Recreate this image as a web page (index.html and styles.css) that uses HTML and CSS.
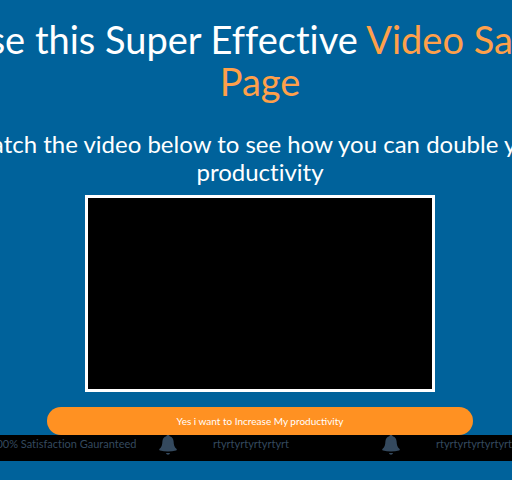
FILE: index.html
```html
<!DOCTYPE html>
<html lang="en">
<head>
<meta charset="utf-8">
<meta name="viewport" content="width=device-width, initial-scale=1">
<title>Video Sales Page</title>
<link rel="stylesheet" href="styles.css">
</head>
<body>
<svg class="defs" aria-hidden="true">
  <symbol id="bell" viewBox="0 0 18 20">
    <path d="M9 0C8 0 7.600 .5 7.300 1.200C4.600 2 3.600 4 3.400 6.500C3.200 10 2.800 12 .4 14C0 14.500 .2 15.500 1 15.500C6 16.800 12 16.800 17 15.500C17.800 15.500 18 14.500 17.600 14C15.200 12 14.800 10 14.600 6.500C14.400 4 13.400 2 10.700 1.200C10.400 .5 10 0 9 0ZM7 18H11C10.700 19.200 10 19.700 9 19.700S7.300 19.200 7 18Z"/>
  </symbol>
</svg>
<main class="page">
  <h1 class="title">Use this Super Effective <span class="accent">Video Sales Page</span></h1>
  <h2 class="subtitle">Watch the video below to see how you can double your productivity</h2>
  <div class="video"></div>
  <button class="cta" type="button">Yes i want to Increase My productivity</button>
</main>
<footer class="features">
  <ul class="list">
    <li class="item"><svg class="bell" aria-hidden="true"><use href="#bell"/></svg><span>100% Satisfaction Gauranteed</span></li>
    <li class="item"><svg class="bell" aria-hidden="true"><use href="#bell"/></svg><span>rtyrtyrtyrtyrtyrt</span></li>
    <li class="item"><svg class="bell" aria-hidden="true"><use href="#bell"/></svg><span>rtyrtyrtyrtyrtyrt</span></li>
  </ul>
</footer>
</body>
</html>
```
FILE: styles.css
```css
* {
  box-sizing: border-box;
}

body {
  margin: 0;
  overflow: hidden;
  background: #00629b;
  color: #fff;
  font-family: Lato, "Liberation Sans", sans-serif;
  font-variant-ligatures: none;
}

.defs {
  display: none;
}

.page {
  display: flex;
  flex-direction: column;
  align-items: center;
  padding: 18px 0 0 8px;
}

.title,
.subtitle {
  flex-shrink: 0;
  width: 120%;
  margin: 0;
  font-weight: 400;
  text-align: center;
}

.title {
  margin-bottom: 28px;
  font-size: 38px;
  line-height: 42px;
}

.accent {
  color: #ffa04a;
}

.subtitle {
  margin-bottom: 9px;
  font-size: 24px;
  line-height: 28px;
}

.video {
  width: 350px;
  aspect-ratio: 350 / 197;
  border: 3px solid #fff;
  background: #000;
}

.cta {
  width: 426px;
  margin-top: 15px;
  padding: 7px 16px;
  border: 0;
  border-radius: 14px;
  background: #ff9122;
  color: #fff;
  font-family: inherit;
  font-size: 10px;
  line-height: 14px;
}

.features {
  background: #000;
  color: #34495e;
  font-size: 11px;
  line-height: 18px;
}

.list {
  display: flex;
  margin: 0 0 0 -64px;
  padding: 0 0 8px;
  list-style: none;
}

.item {
  display: flex;
  flex: none;
  gap: 36px;
  width: 223px;
  white-space: nowrap;
}

.bell {
  flex: none;
  width: 18px;
  height: 20px;
  margin-bottom: -2px;
  fill: currentColor;
}
```
